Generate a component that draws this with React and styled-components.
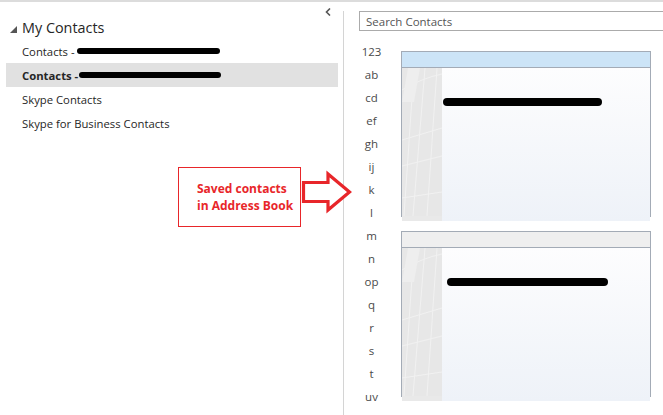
import React from "react";
import styled, { createGlobalStyle } from "styled-components";

const GlobalStyle = createGlobalStyle`
  html, body {
    margin: 0;
    padding: 0;
    background: #ffffff;
  }
  body {
    font-family: "Open Sans", "Noto Sans", Arial, sans-serif;
  }
`;

const Window = styled.div`
  position: relative;
  width: 663px;
  height: 415px;
  overflow: hidden;
  border-top: 2px solid #dcdcdc;
  box-sizing: border-box;
  display: flex;
  background: #ffffff;
`;

const LeftPane = styled.div`
  width: 343px;
  flex-shrink: 0;
  padding-top: 6px;
  display: flex;
  flex-direction: column;
`;

const CollapseBar = styled.div`
  height: 8px;
  display: flex;
  justify-content: flex-end;
  padding-right: 12px;
  color: #555;
`;

const FolderHeader = styled.div`
  height: 23px;
  display: flex;
  align-items: center;
  gap: 4px;
  padding-left: 10px;
  font-size: 14.4px;
  color: #262626;
`;

const Triangle = styled.span`
  width: 0;
  height: 0;
  border-left: 7px solid transparent;
  border-bottom: 7px solid #555;
  margin-top: 3px;
  margin-right: 1px;
`;

const FolderItem = styled.div`
  height: 24px;
  margin: 0 5px 0 6px;
  padding-left: 16px;
  display: flex;
  align-items: center;
  font-size: 11.3px;
  color: #262626;
  font-weight: ${({ $selected }) => ($selected ? 700 : 400)};
  background: ${({ $selected }) => ($selected ? "#e1e1e1" : "transparent")};
  white-space: nowrap;
`;

const Scribble = styled.span`
  display: inline-block;
  width: ${({ $w }) => $w}px;
  height: ${({ $h }) => $h || 6}px;
  margin-left: ${({ $ml }) => $ml || 0}px;
  background: #000;
  border-radius: 4px;
`;

const Divider = styled.div`
  width: 1px;
  margin-top: 9px;
  background: #d4d4d4;
  flex-shrink: 0;
`;

const RightPane = styled.div`
  flex: 1;
  padding: 9px 0 0 15px;
  display: flex;
  flex-direction: column;
  min-width: 0;
`;

const SearchBox = styled.div`
  height: 20px;
  margin-right: -4px;
  border: 1px solid #ababab;
  box-sizing: border-box;
  display: flex;
  align-items: center;
  padding-left: 6px;
  font-size: 11.5px;
  color: #555;
`;

const Body = styled.div`
  display: flex;
  padding-top: 9px;
`;

const LetterColumn = styled.div`
  width: 25px;
  display: flex;
  flex-direction: column;
`;

const Letter = styled.div`
  height: 23px;
  line-height: 23px;
  text-align: center;
  font-size: 11.5px;
  color: #4a4a4a;
`;

const CardColumn = styled.div`
  display: flex;
  flex-direction: column;
  gap: 14px;
  padding: 11px 0 0 17px;
`;

const Card = styled.div`
  width: 250px;
  height: 166px;
  box-sizing: border-box;
  border: 1px solid #a3abb6;
  display: flex;
  flex-direction: column;
`;

const CardHeader = styled.div`
  height: 15px;
  flex-shrink: 0;
  border-bottom: 1px solid #a3abb6;
  background: ${({ $active }) => ($active ? "#cce4f7" : "#efefef")};
`;

const CardBody = styled.div`
  flex: 1;
  display: flex;
  background: linear-gradient(#fdfdfe, #eef2f8);
`;

const Stripe = styled.div`
  width: 40px;
  flex-shrink: 0;
  background: #e9e9e9;
  overflow: hidden;
`;

const CardInfo = styled.div`
  flex: 1;
  padding-top: ${({ $top }) => $top}px;
  padding-left: ${({ $left }) => $left}px;
`;

const Callout = styled.div`
  position: absolute;
  left: 178px;
  top: 165px;
  width: 123px;
  height: 60px;
  box-sizing: border-box;
  border: 1px solid #e8262a;
  padding: 12px 0 0 18px;
  font-size: 12px;
  font-weight: 700;
  line-height: 17px;
  color: #e8262a;
  background: #fff;
`;

const ArrowSvg = styled.svg`
  position: absolute;
  left: 300px;
  top: 168px;
`;

const letters = ["123", "ab", "cd", "ef", "gh", "ij", "k", "l", "m", "n", "op", "q", "r", "s", "t", "uv"];

const StripeArt = () => (
  <svg width="40" height="148" viewBox="0 0 40 148">
    <rect width="40" height="148" fill="#e7e7e7" />
    <g stroke="#f1f1f1" strokeWidth="1" fill="none">
      <path d="M12 0 L2 148" />
      <path d="M23 0 L11 148" />
      <path d="M35 0 L25 148" />
      <path d="M0 72 L40 60" />
      <path d="M0 98 L40 88" />
      <path d="M0 130 L40 124" />
      <path d="M0 22 Q20 10 40 6" />
    </g>
    <rect x="6" y="0" width="12" height="34" fill="#eeeeee" transform="skewX(-10)" />
  </svg>
);

const ContactCard = ({ active, top, left, width }) => (
  <Card>
    <CardHeader $active={active} />
    <CardBody>
      <Stripe>
        <StripeArt />
      </Stripe>
      <CardInfo $top={top} $left={left}>
        <Scribble $w={width} $h={8} />
      </CardInfo>
    </CardBody>
  </Card>
);

const App = () => {
  return (
    <>
      <GlobalStyle />
      <Window>
        <LeftPane>
          <CollapseBar>
            <svg width="6" height="8" viewBox="0 0 6 8">
              <path d="M5 0.5 L1.5 4 L5 7.5" stroke="#555" strokeWidth="1.6" fill="none" />
            </svg>
          </CollapseBar>
          <FolderHeader>
            <Triangle />
            My Contacts
          </FolderHeader>
          <FolderItem>
            Contacts -<Scribble $w={143} $ml={2} />
          </FolderItem>
          <FolderItem $selected>
            Contacts -<Scribble $w={142} $ml={1} />
          </FolderItem>
          <FolderItem>Skype Contacts</FolderItem>
          <FolderItem>Skype for Business Contacts</FolderItem>
        </LeftPane>
        <Divider />
        <RightPane>
          <SearchBox>Search Contacts</SearchBox>
          <Body>
            <LetterColumn>
              {letters.map((l) => (
                <Letter key={l}>{l}</Letter>
              ))}
            </LetterColumn>
            <CardColumn>
              <ContactCard active top={21} left={1} width={159} />
              <ContactCard top={21} left={5} width={161} />
            </CardColumn>
          </Body>
        </RightPane>

        <Callout>
          Saved contacts
          <br />
          in Address Book
        </Callout>
        <ArrowSvg width="54" height="44" viewBox="0 0 54 44">
          <path
            d="M3.5 12.5 L28 12.5 L28 4 L49.5 22 L28 40 L28 31.5 L3.5 31.5 Z"
            fill="#ffffff"
            stroke="#e8262a"
            strokeWidth="3.2"
            strokeLinejoin="miter"
          />
        </ArrowSvg>
      </Window>
    </>
  );
};

export default App;
